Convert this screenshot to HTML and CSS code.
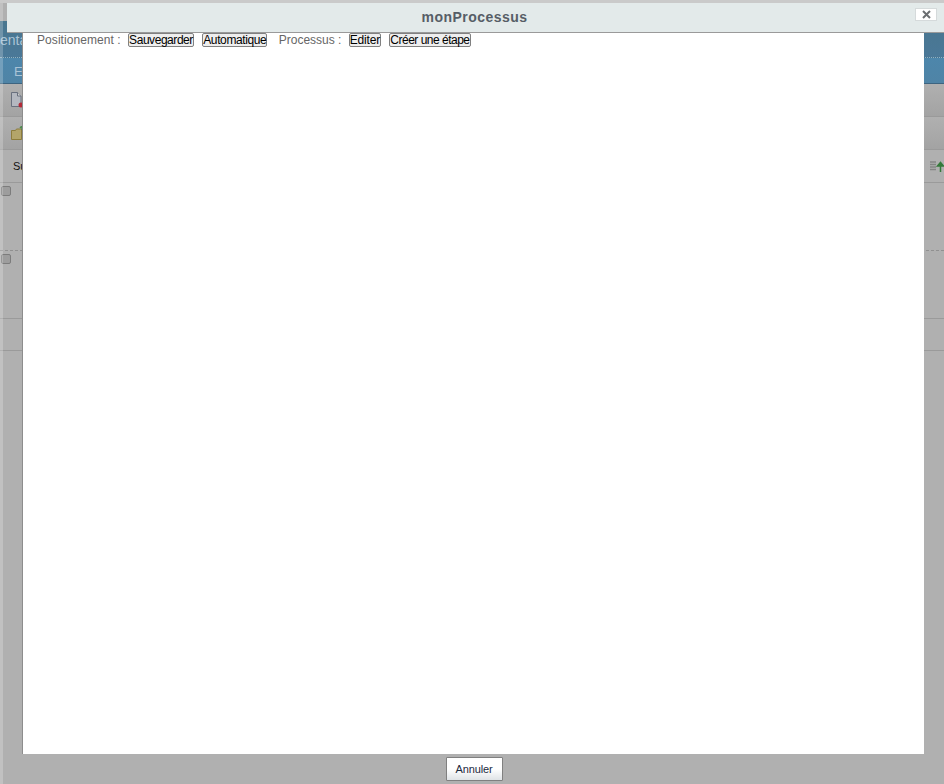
FILE: index.html
```html
<!DOCTYPE html>
<html lang="fr">
<head>
<meta charset="utf-8">
<title>monProcessus</title>
<link rel="stylesheet" href="styles.css">
</head>
<body>
<div class="page">
  <div class="top-gap"></div>
  <header class="banner">
    <div class="banner-title"><span>enta</span></div>
    <div class="banner-nav"><span>E</span></div>
  </header>
  <div class="toolbar toolbar-a">
    <svg class="tool-icon" width="14" height="16" viewBox="0 0 14 16"><path d="M1.500.5h6l3.500 3.500v10.500h-9.500z" fill="#b4b8c0" stroke="#69707e"/><path d="M7.500.5v3.500h3.500" fill="#cfcfcf" stroke="#69707e"/><circle cx="11" cy="13" r="2.500" fill="#b32a38"/></svg>
  </div>
  <div class="toolbar toolbar-b">
    <svg class="tool-icon" width="16" height="15" viewBox="0 0 16 15"><path d="M.5 4.500h4l1-1.500h5v10.500h-10z" fill="#b3a56a" stroke="#8d7d3c"/><path d="M11 0v4M9 2l2-2 2 2" fill="none" stroke="#4d8a4d" stroke-width="1.500"/></svg>
  </div>
  <div class="table-head">
    <span class="head-label">Sujet</span>
    <svg class="sort-icon" width="14" height="11" viewBox="0 0 14 11"><path d="M0 1h6M0 3.500h6M0 6h6M0 8.500h6" stroke="#858585" stroke-width="1.500"/><path d="M10.500 11V4M7.500 5l3-3.500 3 3.500z" fill="#35793a" stroke="#35793a" stroke-width="1.500"/></svg>
  </div>
  <div class="table-row row-dashed"><span class="check"></span></div>
  <div class="table-row"><span class="check"></span></div>
  <div class="table-foot"></div>
</div>
<div class="edge-strip"></div>

<section class="dialog">
  <div class="dialog-title">
    <h1>monProcessus</h1>
    <button class="close-btn" type="button" aria-label="Fermer">
      <svg width="9" height="9" viewBox="0 0 9 9"><path d="M1 1l7 7M8 1L1 8" stroke="#6a6d70" stroke-width="2"/></svg>
    </button>
  </div>
  <div class="dialog-body">
    <span class="label first-label">Positionement :</span>
    <button class="action tight" type="button">Sauvegarder</button>
    <button class="action snug" type="button">Automatique</button>
    <span class="label second-label">Processus :</span>
    <button class="action narrow" type="button">Editer</button>
    <button class="action tightest" type="button">Créer une étape</button>
  </div>
  <div class="dialog-foot">
    <button class="cancel" type="button">Annuler</button>
  </div>
</section>
</body>
</html>
```
FILE: styles.css
```css
* { box-sizing: border-box; }
html, body { margin: 0; height: 100%; }
body {
  position: relative;
  overflow: hidden;
  background: #b0b0b0;
  font-family: "Liberation Sans", Arial, sans-serif;
}
.page { display: flex; flex-direction: column; }
.top-gap { height: 21px; background: linear-gradient(#cacaca 0 3px, #b0b0b0 3px); }
.banner { height: 63px; color: #a9c3d6; border-bottom: 1px solid #3d6480; }
.banner-title {
  height: 37px;
  padding-top: 10px;
  overflow: hidden;
  background: linear-gradient(#49768f, #4a7898);
  border-bottom: 1px dotted #8fb0c4;
  font-size: 14px;
  line-height: 18px;
}
.banner-nav {
  height: 25px;
  padding: 6px 0 0 14px;
  background: linear-gradient(#4d86ab, #4f84a6);
  font-size: 13px;
  line-height: 15px;
}
.toolbar {
  display: flex;
  align-items: center;
  background: linear-gradient(#b0b0b0, #a3a3a3);
  border-bottom: 1px solid #9a9a9a;
}
.toolbar-a { height: 33px; padding-left: 10px; }
.toolbar-b { height: 33px; padding-left: 11px; }
.table-head {
  display: flex;
  align-items: center;
  justify-content: space-between;
  height: 33px;
  padding-left: 13px;
  background: #b0b0b0;
  border-bottom: 1px solid #9a9a9a;
  font-size: 11px;
  color: #111;
}
.sort-icon { flex: none; }
.table-row { height: 68px; padding: 3px 0 0 1px; }
.row-dashed { border-bottom: 1px dashed #909090; }
.table-row:not(.row-dashed) { border-bottom: 1px solid #9a9a9a; }
.check {
  display: block;
  width: 10px;
  height: 10px;
  background: #9d9d9d;
  border: 1px solid #7c7c7c;
  border-radius: 2px;
}
.table-foot { height: 32px; border-bottom: 1px solid #9a9a9a; }
.edge-strip {
  position: absolute;
  top: 3px;
  bottom: 0;
  left: 0;
  width: 3px;
  background: rgba(255, 255, 255, .22);
}
.dialog {
  position: absolute;
  top: 3px;
  left: 7px;
  right: 0;
  bottom: 0;
  display: flex;
  flex-direction: column;
}
.dialog-title {
  position: relative;
  flex: none;
  height: 30px;
  background: #e3eaea;
  border-bottom: 1px solid #9a9a9a;
}
.dialog-title h1 {
  margin: 0;
  padding-right: 2px;
  text-align: center;
  font-size: 14px;
  line-height: 28px;
  font-weight: bold;
  letter-spacing: .45px;
  color: #565d66;
}
.close-btn {
  position: absolute;
  top: 5px;
  right: 7px;
  display: flex;
  align-items: center;
  justify-content: center;
  width: 22px;
  height: 13px;
  padding: 0;
  background: #fff;
  border: 1px solid #d5dadb;
}
.dialog-body {
  flex: none;
  height: 721px;
  margin: 0 20px 0 15px;
  padding-left: 14px;
  background: #fff;
  border-left: 1px solid #8d8d8d;
  font-size: 12px;
  line-height: 14px;
  white-space: nowrap;
}
.label { color: #666; }
.first-label { margin-right: 4px; letter-spacing: .07px; }
.second-label { margin: 0 4px 0 3px; }
.action {
  height: 14px;
  margin: 0 5px 0 0;
  padding: 0;
  vertical-align: top;
  background: #eee;
  border: 1px solid #808080;
  border-radius: 2px;
  color: #000;
  font: 12px/12px "Liberation Sans", Arial, sans-serif;
}
.tight { letter-spacing: -.45px; }
.snug { letter-spacing: -.38px; }
.narrow { letter-spacing: -.2px; }
.tightest { letter-spacing: -.5px; }
.dialog-foot {
  display: flex;
  justify-content: center;
  padding: 3px 3px 0 0;
}
.cancel {
  width: 57px;
  height: 24px;
  padding: 0;
  background: linear-gradient(#fff 50%, #dfe3e6);
  border: 1px solid #808080;
  border-radius: 1px;
  color: #1c2a40;
  font: 11px "Liberation Sans", Arial, sans-serif;
  letter-spacing: -.1px;
}
```
